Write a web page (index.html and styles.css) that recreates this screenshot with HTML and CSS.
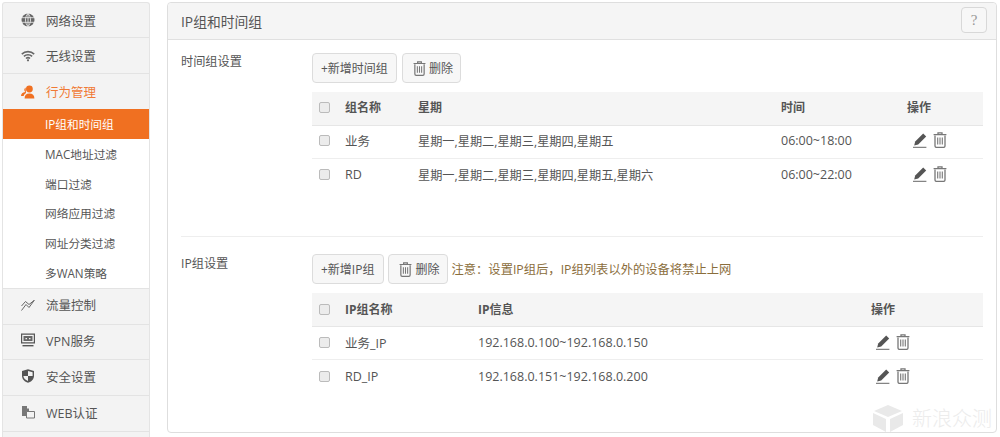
FILE: index.html
```html
<!DOCTYPE html>
<html lang="zh-CN">
<head>
<meta charset="utf-8">
<title>IP组和时间组</title>
<link rel="stylesheet" href="styles.css">
</head>
<body>
<svg class="defs" width="0" height="0" aria-hidden="true">
  <symbol id="trash" viewBox="0 0 14 16">
    <path d="M5 2V.9h4V2M.6 2.600h12.800" fill="none" stroke="currentColor" stroke-width="1.300"/>
    <path d="M2 3.400V14a1.400 1.400 0 0 0 1.400 1.400h7.200A1.400 1.400 0 0 0 12 14V3.400" fill="none" stroke="currentColor" stroke-width="1.300"/>
    <path d="M4.700 5.600v7M7 5.600v7M9.300 5.600v7" fill="none" stroke="currentColor" stroke-width="1.100"/>
  </symbol>
  <symbol id="pencil" viewBox="0 0 14 15">
    <path d="M10.200.6l3 2.800-8 8.100-4 1 1-3.900z" fill="currentColor"/>
    <path d="M0 14.300h13.400" fill="none" stroke="currentColor" stroke-width=".9"/>
  </symbol>
</svg>
<div class="page">
  <nav class="side">
    <a class="nav-item">
      <svg class="nav-ico" viewBox="0 0 14 14"><circle cx="7" cy="7" r="6.500" fill="#666"/><path d="M0 4.700h14M0 9.300h14M7 0v14M7 .4C3.600 4.400 3.600 9.600 7 13.600M7 .4c3.400 4 3.400 9.200 0 13.200" fill="none" stroke="#f3f3f3" stroke-width=".8"/></svg>
      <span>网络设置</span>
    </a>
    <a class="nav-item">
      <svg class="nav-ico" viewBox="0 0 14 11"><path d="M.8 3.600a9 9 0 0 1 12.400 0M2.900 5.800a6 6 0 0 1 8.200 0M5 8a3 3 0 0 1 4 0" fill="none" stroke="#666" stroke-width="1.600"/><circle cx="7" cy="9.800" r="1.100" fill="#666"/></svg>
      <span>无线设置</span>
    </a>
    <a class="nav-item nav-open">
      <svg class="nav-ico" viewBox="0 0 14 14"><circle cx="8.400" cy="4" r="3.400" fill="#f07021"/><path d="M3.600 13.600c0-3.400 1.600-5 4.800-5s5 1.600 5 5zM4.600 2.600a3 3 0 0 0-.4 4.300C1.600 7.300 0 8.800 0 11h2.600c.4-1.200 1.200-2.200 2.400-3" fill="#f07021"/></svg>
      <span>行为管理</span>
    </a>
    <ul class="sub">
      <li class="sub-on">IP组和时间组</li>
      <li>MAC地址过滤</li>
      <li>端口过滤</li>
      <li>网络应用过滤</li>
      <li>网址分类过滤</li>
      <li>多WAN策略</li>
    </ul>
    <a class="nav-item nav-low">
      <svg class="nav-ico" viewBox="0 0 14 12"><path d="M.5 11.500 5 5.500 8 8.500 13.500 1M.5 7 4.500 2.500 8 5.500 13 1.500" fill="none" stroke="#666" stroke-width="1"/></svg>
      <span>流量控制</span>
    </a>
    <a class="nav-item nav-low">
      <svg class="nav-ico" viewBox="0 0 14 13"><path d="M.6.6h12.800v8.800H.6z" fill="none" stroke="#555" stroke-width="1.200"/><path d="M2.500 2.500h9v5h-9z" fill="#666"/><path d="M4.500 4.500h1.500v1.200H4.500zM8 4.500h1.500v1.200H8z" fill="#f3f3f3"/><path d="M1.500 12.200h11" stroke="#555" stroke-width="1.400"/></svg>
      <span>VPN服务</span>
    </a>
    <a class="nav-item nav-low">
      <svg class="nav-ico" viewBox="0 0 14 14"><path d="M7 .3 13 2v4.800c0 3.400-2.400 5.800-6 7-3.600-1.200-6-3.600-6-7V2z" fill="#555"/><path d="M7 2v5H2.400c.1 2.300 1.900 4 4.600 5V7h4.600V3.200z" fill="#f3f3f3"/></svg>
      <span>安全设置</span>
    </a>
    <a class="nav-item nav-low">
      <svg class="nav-ico" viewBox="0 0 14 14"><path d="M1 1h5v2.500h2V8H5v3H1z" fill="#777"/><path d="M5.500 6.500h8v6.500h-8z" fill="#f3f3f3" stroke="#777"/></svg>
      <span>WEB认证</span>
    </a>
  </nav>

  <main class="panel">
    <header class="panel-head">
      <h1>IP组和时间组</h1>
      <button class="help">?</button>
    </header>

    <section class="block block-time">
      <h2>时间组设置</h2>
      <div class="block-body">
        <div class="tools">
          <button class="btn">+新增时间组</button>
          <button class="btn btn-del"><svg class="tr"><use href="#trash"/></svg>删除</button>
        </div>
        <table class="grid grid-time">
          <thead>
            <tr><th class="c-chk"><i class="chk"></i></th><th class="c-a">组名称</th><th class="c-b">星期</th><th class="c-c">时间</th><th>操作</th></tr>
          </thead>
          <tbody>
            <tr><td class="c-chk"><i class="chk"></i></td><td>业务</td><td class="days">星期一,星期二,星期三,星期四,星期五</td><td>06:00~18:00</td><td class="acts"><svg class="pen"><use href="#pencil"/></svg><svg class="bin"><use href="#trash"/></svg></td></tr>
            <tr><td class="c-chk"><i class="chk"></i></td><td>RD</td><td class="days">星期一,星期二,星期三,星期四,星期五,星期六</td><td>06:00~22:00</td><td class="acts"><svg class="pen"><use href="#pencil"/></svg><svg class="bin"><use href="#trash"/></svg></td></tr>
          </tbody>
        </table>
      </div>
    </section>

    <section class="block block-ip">
      <h2>IP组设置</h2>
      <div class="block-body">
        <div class="tools tools-ip">
          <button class="btn btn-ip">+新增IP组</button>
          <button class="btn btn-del"><svg class="tr"><use href="#trash"/></svg>删除</button>
          <span class="note">注意：设置IP组后，IP组列表以外的设备将禁止上网</span>
        </div>
        <table class="grid grid-ip">
          <thead>
            <tr><th class="c-chk"><i class="chk"></i></th><th class="c-d">IP组名称</th><th class="c-e">IP信息</th><th>操作</th></tr>
          </thead>
          <tbody>
            <tr><td class="c-chk"><i class="chk"></i></td><td>业务_IP</td><td>192.168.0.100~192.168.0.150</td><td class="acts acts-ip"><svg class="pen"><use href="#pencil"/></svg><svg class="bin"><use href="#trash"/></svg></td></tr>
            <tr><td class="c-chk"><i class="chk"></i></td><td>RD_IP</td><td>192.168.0.151~192.168.0.200</td><td class="acts acts-ip"><svg class="pen"><use href="#pencil"/></svg><svg class="bin"><use href="#trash"/></svg></td></tr>
          </tbody>
        </table>
      </div>
    </section>
  </main>
</div>
<div class="mark">
  <svg class="mark-ico" viewBox="0 0 30 27"><path d="M15 0 29 6 15 12 1 6zM0 8l13 6v13L0 20zM30 8 17 14v13l13-7z" fill="#e9e9e9"/></svg>
  <span>新浪众测</span>
</div>
</body>
</html>
```

FILE: styles.css
```css
* { box-sizing: border-box; }
html, body { margin: 0; height: 437px; overflow: hidden; background: #fff; }
body {
  font-family: "Open Sans", "Noto Sans CJK SC", sans-serif;
  font-size: 12.5px;
  color: #555;
  position: relative;
}
.defs { position: absolute; }
.page { display: flex; align-items: flex-start; height: 437px; overflow: hidden; padding: 2px 0 0 2px; gap: 17px; }

.side {
  width: 148px;
  height: 435px;
  overflow: hidden;
  flex: none;
  border: 1px solid #e4e4e4;
  border-bottom: 0;
  border-radius: 3px 3px 0 0;
  background: #f3f3f3;
}
.nav-item {
  display: flex;
  align-items: center;
  height: 36px;
  padding-left: 18px;
  border-bottom: 1px solid #e3e3e3;
  color: #555;
  font-size: 12.5px;
}
.nav-item:first-child { height: 35px; }
.nav-item span { margin-left: 11px; }
.nav-ico { width: 14px; height: 14px; flex: none; }
.nav-open { color: #f07a35; height: 35px; border-bottom: 0; }
.nav-low { padding-bottom: 3px; height: 35.8px; }
.sub { list-style: none; margin: 0 -1px; padding: 0; background: #fff; border-bottom: 1px solid #e3e3e3; }
.sub li {
  height: 29.8px;
  line-height: 30.4px;
  padding-left: 42px;
  font-size: 11.7px;
  color: #555;
  border-right: 1px solid #e4e4e4;
  border-left: 1px solid #e4e4e4;
}
.sub .sub-on { background: #f07021; color: #fff; border-color: #f07021; }

.panel {
  flex: none;
  width: 830px;
  height: 431px;
  border: 1px solid #dedede;
  border-radius: 4px;
  background: #fff;
}
.panel-head {
  height: 37px;
  display: flex;
  align-items: center;
  justify-content: space-between;
  padding: 0 9px 0 13px;
  background: #f5f5f5;
  border-bottom: 1px solid #e0e0e0;
  border-radius: 4px 4px 0 0;
}
h1 { margin: 0; font-size: 13.8px; font-weight: 400; color: #555; }
.help {
  width: 26px;
  height: 26px;
  margin-bottom: 2px;
  padding: 0;
  border: 1px solid #d8d8d8;
  border-radius: 4px;
  background: #f7f7f7;
  color: #999;
  font: 15px "Liberation Serif", serif;
}

.block { display: flex; margin: 0 13px; }
.block-time { height: 197px; padding-top: 13px; border-bottom: 1px solid #eee; }
.block-ip { padding-top: 17px; }
h2 { margin: -1px 0 0; width: 131px; flex: none; font-size: 12.2px; font-weight: 400; color: #555; }
.block-ip h2 { margin-top: 0; }
.block-body { width: 671px; flex: none; }
.tools { display: flex; align-items: center; gap: 5px; height: 30px; }
.tools-ip { gap: 4px; }
.btn {
  display: inline-flex;
  align-items: center;
  justify-content: center;
  height: 30px;
  padding: 0 8px;
  border: 1px solid #dcdcdc;
  border-radius: 4px;
  background: #f7f7f7;
  color: #555;
  font: inherit;
  font-size: 12px;
  white-space: nowrap;
}
.btn-ip { padding-right: 9px; }
.btn-del { padding: 0 7px 0 10px; }
.tools-ip .btn-del { padding-right: 8px; }
.tr { width: 13px; height: 15px; margin-right: 3px; color: #777; }
.note { color: #8a6d3b; font-size: 12.3px; margin-left: -1px; }

.grid { width: 671px; border-collapse: collapse; table-layout: fixed; margin-top: 9px; }
.grid th { height: 33px; background: #f5f5f5; text-align: left; font-weight: 700; color: #555; font-size: 12px; padding: 0 0 2px; border-bottom: 1px solid #e6e6e6; }
.grid td { height: 33.5px; padding: 0 0 2px; border-bottom: 1px solid #eee; font-size: 12.5px; color: #555; }
.grid tr:last-child td { border-bottom: 0; }
.grid td.days { font-size: 12.2px; }
.grid-ip th, .grid-ip td { padding-bottom: 0; }
.grid .c-chk { width: 33px; padding-left: 7px; }
.c-a { width: 73px; }
.c-b { width: 363px; }
.c-c { width: 126px; }
.c-d { width: 133px; }
.c-e { width: 393px; }
.chk {
  display: block;
  width: 11px;
  height: 11px;
  border: 1px solid #bbb;
  border-radius: 2px;
  background: #ececec;
}
.acts { color: #7a7a7a; }
.pen { width: 14px; height: 15px; margin: 0 6px; vertical-align: -2px; }
.bin { width: 14px; height: 16px; color: #777; vertical-align: -2px; }
.acts-ip .pen { margin-left: 5px; }

.mark {
  position: absolute;
  left: 873px;
  top: 405px;
  display: flex;
  align-items: center;
  gap: 9px;
  color: #ececec;
  font-size: 20px;
  line-height: 27px;
  font-weight: 300;
}
.mark-ico { width: 30px; height: 27px; }
```
